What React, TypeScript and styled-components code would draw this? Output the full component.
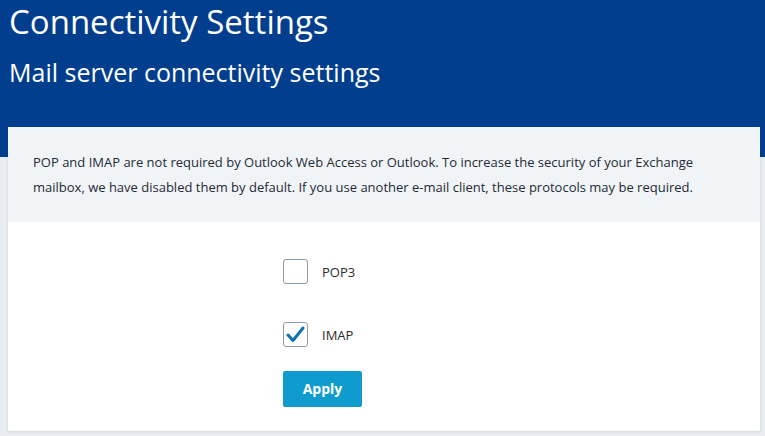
import * as React from "react"
import styled, { createGlobalStyle } from "styled-components"

const GlobalStyle = createGlobalStyle`
    html, body {
        margin: 0;
        padding: 0;
        background: #e9edf1;
        font-family: "Open Sans", "Noto Sans", sans-serif;
    }
`

const Page = styled.div`
    width: 765px;
    height: 436px;
    overflow: hidden;
`

const Header = styled.header`
    height: 157px;
    background: #013e8d;
    color: #ffffff;
    padding: 0 0 0 9px;
    box-sizing: border-box;
`

const Title = styled.h1`
    margin: 0;
    font-family: "Open Sans", sans-serif;
    font-weight: 400;
    font-size: 33px;
    line-height: 44px;
`

const Subtitle = styled.h2`
    margin: 12px 0 0;
    font-family: "Open Sans", sans-serif;
    font-weight: 400;
    font-size: 25px;
    line-height: 32px;
`

const Card = styled.section`
    margin: -30px 5px 0 8px;
    background: #ffffff;
    box-shadow: 0 1px 3px rgba(30, 50, 80, 0.12);
`

const Notice = styled.div`
    background: #f1f4f7;
    padding: 23px 20px 22px 25px;
    font-size: 13px;
    line-height: 25px;
    color: #1f2a36;
`

const Form = styled.div`
    padding: 37px 0 24px 275px;
    display: flex;
    flex-direction: column;
    align-items: flex-start;
`

const OptionRow = styled.label<{ $gap: number }>`
    display: flex;
    align-items: center;
    gap: 14px;
    margin-bottom: ${(p) => p.$gap}px;
    font-size: 13px;
    color: #2b2b2b;
    cursor: pointer;
`

const Box = styled.span`
    width: 25px;
    height: 25px;
    box-sizing: border-box;
    border: 1px solid #8e99a6;
    border-radius: 3px;
    background: #ffffff;
    display: flex;
    align-items: center;
    justify-content: center;
`

const ApplyButton = styled.button`
    width: 79px;
    height: 36px;
    border: none;
    border-radius: 2px;
    background: #109bcf;
    color: #ffffff;
    font-family: "Open Sans", sans-serif;
    font-weight: 700;
    font-size: 14px;
    padding: 0 0 1px;
    cursor: pointer;
`

function Check() {
    return (
        <svg width="19" height="17" viewBox="0 0 19 17">
            <path d="M2 9 L7 14.5 L17 2" fill="none" stroke="#0f72ad" strokeWidth="3" strokeLinecap="round" strokeLinejoin="round" />
        </svg>
    )
}

export default function App() {
    const [pop, setPop] = React.useState(false)
    const [imap, setImap] = React.useState(true)

    return (
        <Page>
            <GlobalStyle />
            <Header>
                <Title>Connectivity Settings</Title>
                <Subtitle>Mail server connectivity settings</Subtitle>
            </Header>
            <Card>
                <Notice>
                    POP and IMAP are not required by Outlook Web Access or Outlook. To increase the security of your Exchange
                    mailbox, we have disabled them by default. If you use another e-mail client, these protocols may be required.
                </Notice>
                <Form>
                    <OptionRow $gap={38} onClick={() => setPop(!pop)}>
                        <Box>{pop && <Check />}</Box>
                        POP3
                    </OptionRow>
                    <OptionRow $gap={24} onClick={() => setImap(!imap)}>
                        <Box>{imap && <Check />}</Box>
                        IMAP
                    </OptionRow>
                    <ApplyButton>Apply</ApplyButton>
                </Form>
            </Card>
        </Page>
    )
}
